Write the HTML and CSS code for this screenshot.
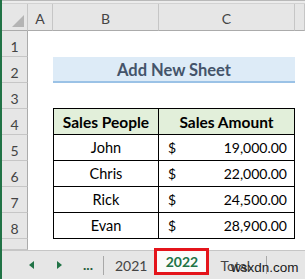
FILE: index.html
```html
<!DOCTYPE html>
<html>
<head>
<meta charset="utf-8">
<link rel="stylesheet" href="styles.css">
</head>
<body>
<div class="window">
  <div class="topbar"></div>
  <div class="sheet">
    <div class="corner"><span class="tri"></span></div>
    <div class="colh">A</div>
    <div class="colh">B</div>
    <div class="colh">C</div>
    <div class="colh"></div>

    <div class="rowh">1</div><div class="c"></div><div class="c"></div><div class="c"></div><div class="c"></div>

    <div class="rowh">2</div><div class="c"></div><div class="banner">Add New Sheet</div><div class="c"></div>

    <div class="rowh">3</div><div class="c"></div><div class="c above"></div><div class="c above"></div><div class="c"></div>

    <div class="rowh">4</div><div class="c"></div><div class="t first head">Sales People</div><div class="t last head">Sales Amount</div><div class="c"></div>

    <div class="rowh">5</div><div class="c"></div><div class="t first name">John</div><div class="t last amt"><span>$</span><span>19,000.00</span></div><div class="c"></div>

    <div class="rowh">6</div><div class="c"></div><div class="t first name">Chris</div><div class="t last amt"><span>$</span><span>22,000.00</span></div><div class="c"></div>

    <div class="rowh">7</div><div class="c"></div><div class="t first name">Rick</div><div class="t last amt"><span>$</span><span>24,500.00</span></div><div class="c"></div>

    <div class="rowh">8</div><div class="c"></div><div class="t first name">Evan</div><div class="t last amt"><span>$</span><span>28,900.00</span></div><div class="c"></div>

    <div class="rowh"></div><div class="c"></div><div class="c"></div><div class="c"></div><div class="c"></div>
  </div>
  <div class="tabs">
    <span class="arrow left"></span>
    <span class="arrow right"></span>
    <span class="dots">...</span>
    <span class="sep"></span>
    <span class="tab">2021</span>
    <span class="tab active">2022</span>
    <span class="tab total">Total</span>
    <span class="sep sep2"></span>
    <span class="plus"></span>
    <span class="watermark">wsxdn.com</span>
  </div>
</div>
</body>
</html>
```

FILE: styles.css
```css
* { box-sizing: border-box; }
html, body { margin: 0; padding: 0; }
body {
  width: 305px;
  height: 279px;
  overflow: hidden;
  background: #fff;
  font-family: Lato, "Open Sans", sans-serif;
}
.window {
  width: 305px;
  height: 279px;
  border-left: 2px solid #217346;
  display: flex;
  flex-direction: column;
  position: relative;
  overflow: hidden;
}
.topbar {
  height: 4px;
  background: #ececec;
  border-top: 1px solid #b9b9b9;
  border-bottom: 1px solid #d2d2d2;
}
.sheet {
  display: grid;
  grid-template-columns: 26px 25px 106px 136px 1fr;
  grid-template-rows: 27px repeat(8, 26px) 11px;
}
.corner {
  background: #e6e6e6;
  border-right: 1px solid #c6c6c6;
  border-bottom: 1px solid #ababab;
  position: relative;
}
.tri {
  position: absolute;
  right: 3px;
  bottom: 3px;
  width: 0;
  height: 0;
  border-left: 12px solid transparent;
  border-bottom: 12px solid #b4b4b4;
}
.colh {
  background: #e6e6e6;
  border-right: 1px solid #c6c6c6;
  border-bottom: 1px solid #ababab;
  display: flex;
  align-items: center;
  justify-content: center;
  padding-top: 3px;
  font-size: 14px;
  color: #444;
}
.rowh {
  background: #e6e6e6;
  border-right: 1px solid #ababab;
  border-bottom: 1px solid #c6c6c6;
  display: flex;
  align-items: center;
  justify-content: center;
  padding-top: 5px;
  font-size: 14px;
  color: #444;
}
.c { background: #fff; }
.c.above { border-bottom: 1px solid #000; }
.banner {
  grid-column: span 2;
  background: #ddebf7;
  border-bottom: 2px solid #9bc2e6;
  display: flex;
  align-items: center;
  justify-content: center;
  font-weight: 700;
  font-size: 16.5px;
  color: #44546a;
  padding-top: 1px;
}
.t {
  border-bottom: 1px solid #000;
  display: flex;
  align-items: center;
  font-size: 14px;
  color: #000;
}
.t.first { border-left: 1px solid #000; border-right: 1px solid #000; }
.t.last { border-right: 1px solid #000; }
.t.head {
  background: #e2efda;
  font-weight: 700;
  justify-content: center;
  font-size: 15.5px;
}
.t.name { justify-content: center; font-size: 14.5px; }
.t.amt {
  justify-content: space-between;
  padding-left: 9px;
  padding-right: 7px;
}
.tabs {
  flex: 1;
  background: #e6e6e6;
  border-top: 1px solid #c6c6c6;
  display: flex;
  align-items: center;
  position: relative;
  font-size: 14px;
  color: #444;
}
.tabs > * { flex: none; }
.arrow {
  width: 0;
  height: 0;
  border-top: 4px solid transparent;
  border-bottom: 4px solid transparent;
}
.arrow.left {
  margin-left: 27px;
  border-right: 5px solid #217346;
}
.arrow.right {
  margin-left: 23px;
  border-left: 5px solid #217346;
}
.dots {
  margin-left: 21px;
  color: #1f5e3b;
  font-weight: 700;
  font-size: 14px;
  padding-bottom: 2px;
}
.sep {
  width: 1px;
  height: 19px;
  background: #a8a8a8;
  margin-left: 10px;
}
.tab { margin-left: 11px; }
.tab.active {
  margin-left: 7px;
  width: 55px;
  height: 27px;
  margin-top: -3px;
  align-self: flex-start;
  border: 3px solid #e4141b;
  background: #fbfbfb;
  color: #217346;
  font-weight: 700;
  display: flex;
  align-items: center;
  justify-content: center;
}
.tab.total { margin-left: 11px; }
.sep2 { margin-left: 16px; height: 18px; }
.plus {
  margin-left: 38px;
  width: 12px;
  height: 12px;
  border: 1px solid #888;
  border-radius: 50%;
}
.watermark {
  position: absolute;
  left: 229px;
  top: 9px;
  font-family: "Liberation Sans", Arial, sans-serif;
  font-size: 13.5px;
  color: #1a1a1a;
}
```
